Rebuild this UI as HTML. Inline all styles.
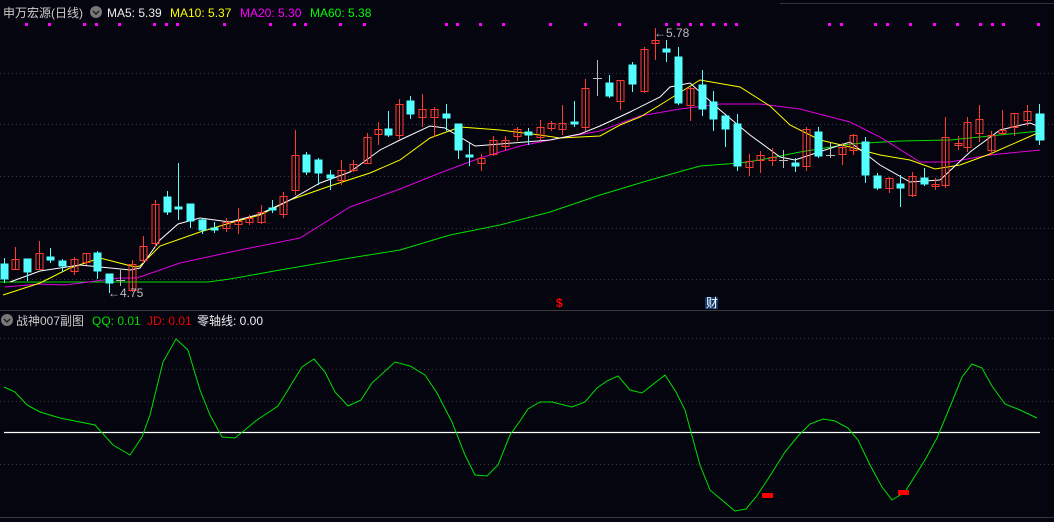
<!DOCTYPE html><html><head><meta charset="utf-8"><style>
html,body{margin:0;padding:0;background:#05050f;width:1054px;height:522px;overflow:hidden;font-family:"Liberation Sans","Noto Sans CJK SC",sans-serif}
.t{position:absolute;font-size:12px;white-space:nowrap;line-height:14px}
</style></head><body>
<svg width="1054" height="522" style="position:absolute;left:0;top:0" xmlns="http://www.w3.org/2000/svg">
<g stroke="#3a3a44" stroke-dasharray="1 3" stroke-width="1">
<line x1="0" y1="73.5" x2="1054" y2="73.5"/><line x1="0" y1="124.5" x2="1054" y2="124.5"/><line x1="0" y1="176.5" x2="1054" y2="176.5"/><line x1="0" y1="228.5" x2="1054" y2="228.5"/><line x1="0" y1="279.5" x2="1054" y2="279.5"/>
<line x1="0" y1="338.5" x2="1054" y2="338.5"/><line x1="0" y1="369.5" x2="1054" y2="369.5"/><line x1="0" y1="401.5" x2="1054" y2="401.5"/><line x1="0" y1="464.5" x2="1054" y2="464.5"/>
</g>
<line x1="780" y1="3.5" x2="1054" y2="3.5" stroke="#333"/>
<line x1="0" y1="310.5" x2="1054" y2="310.5" stroke="#3a3a3a"/>
<line x1="0" y1="517.5" x2="1054" y2="517.5" stroke="#3a3a3a"/>
<g fill="#f0f">
<rect x="25" y="23" width="3" height="3"/><rect x="48" y="23" width="3" height="3"/><rect x="83" y="23" width="3" height="3"/><rect x="95" y="23" width="3" height="3"/><rect x="118" y="23" width="3" height="3"/><rect x="153" y="23" width="3" height="3"/><rect x="165" y="23" width="3" height="3"/><rect x="176" y="23" width="3" height="3"/><rect x="223" y="23" width="3" height="3"/><rect x="269" y="23" width="3" height="3"/><rect x="293" y="23" width="3" height="3"/><rect x="304" y="23" width="3" height="3"/><rect x="339" y="23" width="3" height="3"/><rect x="363" y="23" width="3" height="3"/><rect x="445" y="23" width="3" height="3"/><rect x="456" y="23" width="3" height="3"/><rect x="479" y="23" width="3" height="3"/><rect x="502" y="23" width="3" height="3"/><rect x="549" y="23" width="3" height="3"/><rect x="584" y="23" width="3" height="3"/><rect x="618" y="23" width="3" height="3"/><rect x="665" y="23" width="3" height="3"/><rect x="677" y="23" width="3" height="3"/><rect x="689" y="23" width="3" height="3"/><rect x="700" y="23" width="3" height="3"/><rect x="712" y="23" width="3" height="3"/><rect x="724" y="23" width="3" height="3"/><rect x="735" y="23" width="3" height="3"/><rect x="828" y="23" width="3" height="3"/><rect x="840" y="23" width="3" height="3"/><rect x="874" y="23" width="3" height="3"/><rect x="886" y="23" width="3" height="3"/><rect x="909" y="23" width="3" height="3"/><rect x="933" y="23" width="3" height="3"/><rect x="956" y="23" width="3" height="3"/><rect x="979" y="23" width="3" height="3"/><rect x="991" y="23" width="3" height="3"/><rect x="1002" y="23" width="3" height="3"/><rect x="1037" y="23" width="3" height="3"/>
</g>
<g fill="none" stroke-width="1">
<polyline stroke="#00e000" points="0,282 137,282 208,282 230,279 280,270 350,258 400,250 450,235 500,225 550,212 600,195 650,180 700,166 740,163 760,160 800,152 850,144 900,141 950,140 1040,131"/>
<polyline stroke="#e000e0" points="5,287 40,284 65,285 120,278 137,278 180,263 240,250 300,238 350,207 400,189 440,173 480,158 520,146 560,138 600,131 640,116 680,109 720,104 760,104 800,109 850,122 880,137 920,162 950,162 990,155 1040,150"/>
<polyline stroke="#ffff00" points="3,295 40,283 70,268 100,258 135,267 140,266 160,246 200,232 230,223 260,215 290,200 330,186 370,173 400,160 430,138 460,127 500,130 540,135 560,138 600,136 620,125 640,117 660,105 700,80 740,87 770,106 790,125 820,140 850,147 880,155 910,160 935,169 960,165 990,154 1040,132"/>
<polyline stroke="#ffffff" points="10,282 40,271 80,265 130,270 140,268 160,240 178,224 200,218 230,222 260,214 290,200 320,183 350,172 380,150 400,140 430,126 445,128 475,146 500,144 550,140 580,134 600,126 630,112 660,97 670,87 690,83 720,110 750,135 780,157 795,160 825,150 850,142 880,165 910,182 940,180 970,152 1000,130 1030,123 1040,127"/>
</g>
<g fill="#54ffff" stroke="#54ffff">
<line x1="4.5" y1="258" x2="4.5" y2="283"/><rect x="1" y="264" width="7" height="15"/>
<line x1="27.5" y1="259" x2="27.5" y2="281"/><rect x="24" y="259" width="7" height="13"/>
<line x1="50.5" y1="248" x2="50.5" y2="263"/><rect x="47" y="257" width="7" height="3"/>
<line x1="62.5" y1="259" x2="62.5" y2="272"/><rect x="59" y="261" width="7" height="5"/>
<line x1="97.5" y1="251" x2="97.5" y2="279"/><rect x="94" y="253" width="7" height="18"/>
<line x1="109.5" y1="275" x2="109.5" y2="293"/><rect x="106" y="274" width="7" height="9"/>
<line x1="167.5" y1="191" x2="167.5" y2="215"/><rect x="164" y="197" width="7" height="15"/>
<line x1="178.5" y1="163" x2="178.5" y2="220"/><rect x="175" y="207" width="7" height="2"/>
<line x1="190.5" y1="204" x2="190.5" y2="228"/><rect x="187" y="204" width="7" height="17"/>
<line x1="202.5" y1="218" x2="202.5" y2="234"/><rect x="199" y="220" width="7" height="10"/>
<line x1="214.5" y1="222" x2="214.5" y2="233"/><rect x="211" y="228" width="7" height="2"/>
<line x1="272.5" y1="200" x2="272.5" y2="213"/><rect x="269" y="208" width="7" height="2"/>
<line x1="306.5" y1="152" x2="306.5" y2="175"/><rect x="303" y="155" width="7" height="17"/>
<line x1="318.5" y1="158" x2="318.5" y2="185"/><rect x="315" y="160" width="7" height="13"/>
<line x1="330.5" y1="170" x2="330.5" y2="190"/><rect x="327" y="175" width="7" height="3"/>
<line x1="388.5" y1="111" x2="388.5" y2="137"/><rect x="385" y="129" width="7" height="6"/>
<line x1="410.5" y1="96" x2="410.5" y2="119"/><rect x="407" y="101" width="7" height="13"/>
<line x1="446.5" y1="104" x2="446.5" y2="131"/><rect x="443" y="114" width="7" height="4"/>
<line x1="458.5" y1="124" x2="458.5" y2="159"/><rect x="455" y="124" width="7" height="26"/>
<line x1="469.5" y1="143" x2="469.5" y2="166"/><rect x="466" y="155" width="7" height="2"/>
<line x1="528.5" y1="128" x2="528.5" y2="145"/><rect x="525" y="132" width="7" height="3"/>
<line x1="574.5" y1="101" x2="574.5" y2="127"/><rect x="571" y="122" width="7" height="2"/>
<line x1="609.5" y1="75" x2="609.5" y2="98"/><rect x="606" y="83" width="7" height="13"/>
<line x1="632.5" y1="62" x2="632.5" y2="92"/><rect x="629" y="65" width="7" height="19"/>
<line x1="666.5" y1="40" x2="666.5" y2="62"/><rect x="663" y="49" width="7" height="3"/>
<line x1="678.5" y1="47" x2="678.5" y2="105"/><rect x="675" y="57" width="7" height="46"/>
<line x1="702.5" y1="70" x2="702.5" y2="116"/><rect x="699" y="85" width="7" height="24"/>
<line x1="713.5" y1="91" x2="713.5" y2="131"/><rect x="710" y="102" width="7" height="17"/>
<line x1="725.5" y1="116" x2="725.5" y2="147"/><rect x="722" y="116" width="7" height="13"/>
<line x1="737.5" y1="114" x2="737.5" y2="171"/><rect x="734" y="124" width="7" height="42"/>
<line x1="795.5" y1="158" x2="795.5" y2="172"/><rect x="792" y="163" width="7" height="3"/>
<line x1="818.5" y1="127" x2="818.5" y2="158"/><rect x="815" y="132" width="7" height="24"/>
<line x1="865.5" y1="137" x2="865.5" y2="183"/><rect x="862" y="142" width="7" height="33"/>
<line x1="877.5" y1="173" x2="877.5" y2="190"/><rect x="874" y="176" width="7" height="12"/>
<line x1="900.5" y1="175" x2="900.5" y2="207"/><rect x="897" y="184" width="7" height="4"/>
<line x1="924.5" y1="168" x2="924.5" y2="186"/><rect x="921" y="178" width="7" height="6"/>
<line x1="1039.5" y1="104" x2="1039.5" y2="145"/><rect x="1036" y="114" width="8" height="26"/>
</g>
<g fill="none" stroke="#ff3b30">
<line x1="15.5" y1="247" x2="15.5" y2="270"/><rect x="12" y="259.5" width="7" height="10"/>
<line x1="39.5" y1="241" x2="39.5" y2="270"/><rect x="36" y="253.5" width="7" height="16"/>
<line x1="74.5" y1="257" x2="74.5" y2="275"/><rect x="71" y="259.5" width="7" height="12"/>
<line x1="86.5" y1="253" x2="86.5" y2="265"/><rect x="83" y="253.5" width="7" height="9"/>
<line x1="132.5" y1="260" x2="132.5" y2="292"/><rect x="129" y="264.5" width="7" height="26"/>
<line x1="143.5" y1="236" x2="143.5" y2="263"/><rect x="140" y="246.5" width="7" height="14"/>
<line x1="155.5" y1="200" x2="155.5" y2="247"/><rect x="152" y="204.5" width="7" height="39"/>
<line x1="226.5" y1="218" x2="226.5" y2="232"/><rect x="223" y="222.5" width="7" height="6"/>
<line x1="238.5" y1="208" x2="238.5" y2="234"/><rect x="235" y="221.5" width="7" height="3"/>
<line x1="249.5" y1="215" x2="249.5" y2="225"/><rect x="246" y="218.5" width="7" height="4"/>
<line x1="261.5" y1="205" x2="261.5" y2="224"/><rect x="258" y="212.5" width="7" height="10"/>
<line x1="283.5" y1="192" x2="283.5" y2="218"/><rect x="280" y="196.5" width="7" height="18"/>
<line x1="295.5" y1="130" x2="295.5" y2="195"/><rect x="292" y="155.5" width="7" height="35"/>
<line x1="341.5" y1="160" x2="341.5" y2="185"/><rect x="338" y="170.5" width="7" height="10"/>
<line x1="353.5" y1="160" x2="353.5" y2="172"/><rect x="350" y="164.5" width="7" height="6"/>
<line x1="367.5" y1="133" x2="367.5" y2="164"/><rect x="364" y="137.5" width="7" height="26"/>
<line x1="378.5" y1="122" x2="378.5" y2="145"/><rect x="375" y="129.5" width="7" height="5"/>
<line x1="399.5" y1="99" x2="399.5" y2="140"/><rect x="396" y="104.5" width="7" height="31"/>
<line x1="422.5" y1="94" x2="422.5" y2="127"/><rect x="419" y="109.5" width="7" height="8"/>
<line x1="434.5" y1="107" x2="434.5" y2="137"/><rect x="431" y="109.5" width="7" height="8"/>
<line x1="481.5" y1="154" x2="481.5" y2="171"/><rect x="478" y="158.5" width="7" height="5"/>
<line x1="493.5" y1="136" x2="493.5" y2="156"/><rect x="490" y="140.5" width="7" height="14"/>
<line x1="505.5" y1="136" x2="505.5" y2="151"/><rect x="502" y="140.5" width="7" height="6"/>
<line x1="517.5" y1="127" x2="517.5" y2="141"/><rect x="514" y="129.5" width="7" height="7"/>
<line x1="540.5" y1="120" x2="540.5" y2="140"/><rect x="537" y="127.5" width="7" height="10"/>
<line x1="551.5" y1="121" x2="551.5" y2="131"/><rect x="548" y="123.5" width="7" height="5"/>
<line x1="562.5" y1="105" x2="562.5" y2="135"/><rect x="559" y="123.5" width="7" height="6"/>
<line x1="585.5" y1="79" x2="585.5" y2="131"/><rect x="582" y="88.5" width="7" height="39"/>
<line x1="620.5" y1="80" x2="620.5" y2="110"/><rect x="617" y="80.5" width="7" height="21"/>
<line x1="644.5" y1="47" x2="644.5" y2="93"/><rect x="641" y="49.5" width="7" height="42"/>
<line x1="655.5" y1="28" x2="655.5" y2="60"/><rect x="652" y="40.5" width="7" height="3"/>
<line x1="690.5" y1="87" x2="690.5" y2="121"/><rect x="687" y="88.5" width="7" height="17"/>
<line x1="749.5" y1="154" x2="749.5" y2="176"/><rect x="746" y="161.5" width="7" height="6"/>
<line x1="760.5" y1="151" x2="760.5" y2="173"/><rect x="757" y="155.5" width="7" height="5"/>
<line x1="772.5" y1="148" x2="772.5" y2="166"/><rect x="769" y="157.5" width="7" height="3"/>
<line x1="806.5" y1="127" x2="806.5" y2="171"/><rect x="803" y="129.5" width="7" height="37"/>
<line x1="842.5" y1="143" x2="842.5" y2="165"/><rect x="839" y="147.5" width="7" height="7"/>
<line x1="853.5" y1="134" x2="853.5" y2="155"/><rect x="850" y="135.5" width="7" height="15"/>
<line x1="889.5" y1="177" x2="889.5" y2="193"/><rect x="886" y="178.5" width="7" height="10"/>
<line x1="912.5" y1="172" x2="912.5" y2="197"/><rect x="909" y="176.5" width="7" height="19"/>
<line x1="935.5" y1="178" x2="935.5" y2="190"/><rect x="932" y="184.5" width="7" height="2"/>
<line x1="945.5" y1="117" x2="945.5" y2="188"/><rect x="942" y="137.5" width="7" height="48"/>
<line x1="958.5" y1="136" x2="958.5" y2="150"/><rect x="955" y="143.5" width="7" height="2"/>
<line x1="967.5" y1="117" x2="967.5" y2="152"/><rect x="964" y="122.5" width="7" height="25"/>
<line x1="979.5" y1="105" x2="979.5" y2="142"/><rect x="976" y="119.5" width="7" height="14"/>
<line x1="991.5" y1="131" x2="991.5" y2="155"/><rect x="988" y="135.5" width="7" height="15"/>
<line x1="1002.5" y1="110" x2="1002.5" y2="135"/><rect x="999" y="130.5" width="7" height="3"/>
<line x1="1014.5" y1="113" x2="1014.5" y2="136"/><rect x="1011" y="113.5" width="7" height="14"/>
<line x1="1027.5" y1="105" x2="1027.5" y2="126"/><rect x="1024" y="111.5" width="7" height="9"/>
</g>
<g stroke="#bbb">
<line x1="120.5" y1="270" x2="120.5" y2="286"/><line x1="116" y1="280.5" x2="125" y2="280.5"/>
<line x1="597.5" y1="60" x2="597.5" y2="96"/><line x1="593" y1="78.5" x2="602" y2="78.5"/>
<line x1="783.5" y1="150" x2="783.5" y2="168"/><line x1="779" y1="160.5" x2="788" y2="160.5"/>
<line x1="830.5" y1="142" x2="830.5" y2="158"/><line x1="826" y1="155.5" x2="835" y2="155.5"/>
</g>
<line x1="4" y1="432.5" x2="1040" y2="432.5" stroke="#fff" stroke-width="1.3"/>
<polyline fill="none" stroke="#00e000" points="4,387 15,392 27,405 40,412 60,418 95,425 113,445 130,455 142,437 150,415 163,362 176,339 188,350 200,390 210,415 222,437 235,438 257,420 278,406 302,367 314,359 325,372 335,392 348,406 361,400 372,383 395,362 410,366 425,375 437,393 452,422 465,455 475,475 487,476 498,465 510,435 520,421 528,409 540,402 552,402 572,407 585,402 597,388 607,381 618,376 630,390 642,393 665,375 676,392 685,410 700,465 710,490 723,501 735,511 746,509 756,497 768,479 785,452 798,436 810,424 823,419 835,421 848,428 858,440 870,465 882,487 892,500 905,492 925,460 937,438 952,402 962,377 972,364 982,368 992,386 1005,404 1020,410 1037,418"/>
<rect x="762" y="493" width="11" height="5" fill="#f00"/>
<rect x="898" y="490" width="11" height="5" fill="#f00"/>
<circle cx="96" cy="12" r="6" fill="#777"/><polyline points="93,11 96,14 99,11" fill="none" stroke="#222" stroke-width="1.5"/>
<circle cx="7" cy="320" r="6" fill="#777"/><polyline points="4,319 7,322 10,319" fill="none" stroke="#222" stroke-width="1.5"/>
<rect x="705" y="297" width="13" height="12" fill="#123a6a"/>
</svg>
<div class="t" style="left:3px;top:6px;color:#ccc">申万宏源(日线)</div>
<div class="t" style="left:107px;top:6px;color:#eee">MA5: 5.39</div>
<div class="t" style="left:170px;top:6px;color:#ff0">MA10: 5.37</div>
<div class="t" style="left:240px;top:6px;color:#f0f">MA20: 5.30</div>
<div class="t" style="left:310px;top:6px;color:#0f0">MA60: 5.38</div>
<div class="t" style="left:16px;top:314px;color:#ccc">战神007副图</div>
<div class="t" style="left:92px;top:314px;color:#0d0">QQ: 0.01</div>
<div class="t" style="left:147px;top:314px;color:#e00">JD: 0.01</div>
<div class="t" style="left:197px;top:314px;color:#eee">零轴线: 0.00</div>
<div class="t" style="left:654px;top:26px;color:#bbb">←5.78</div>
<div class="t" style="left:108px;top:286px;color:#bbb">←4.75</div>
<div class="t" style="left:556px;top:296px;color:#f00;font-weight:bold">$</div>
<div class="t" style="left:706px;top:296px;color:#fff">财</div>
</body></html>
